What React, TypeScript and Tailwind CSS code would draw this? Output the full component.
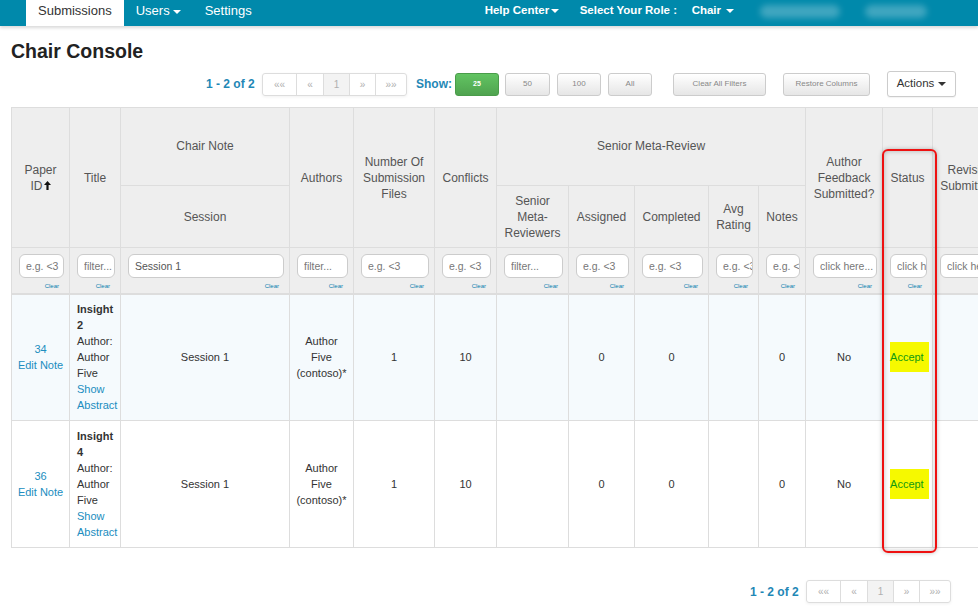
import React from 'react'

const th =
  'border border-[#dddddd] bg-[#eeeeee] px-[3px] text-center align-middle text-[12px] font-normal leading-[16px] text-[#555555]'
const td = 'border border-[#dddddd] text-center align-middle text-[11px] leading-[16px] text-[#333333]'
const link = 'text-[#208dc0]'

const Caret = ({ className = 'border-t-white' }: { className?: string }) => (
  <span className={`inline-block h-0 w-0 border-x-[4px] border-t-[4px] border-x-transparent align-middle ${className}`} />
)

function Pager() {
  const cells: [string, string][] = [
    ['««', 'w-[33px]'],
    ['«', 'w-[27px]'],
    ['1', 'w-[26px] bg-[#f3f3f3] text-[#999999]'],
    ['»', 'w-[26px]'],
    ['»»', 'w-[31px]'],
  ]
  return (
    <div className="flex items-center">
      <span className="mr-[8px] w-[48px] whitespace-nowrap text-[12px] font-bold text-[#1f88b6]">1 - 2 of 2</span>
      <div className="flex h-[23px] overflow-hidden rounded-[3px] border border-[#dddddd] shadow-[0_1px_3px_rgba(0,0,0,0.06)]">
        {cells.map(([label, cls], i) => (
          <div
            key={i}
            className={`flex items-center justify-center text-[10px] text-[#b0b0b0] ${i > 0 ? 'border-l border-[#dddddd]' : ''} ${cls}`}
          >
            {label}
          </div>
        ))}
      </div>
    </div>
  )
}

const grayBtn =
  'flex h-[23px] items-center justify-center rounded-[3px] border border-[#cccccc] bg-gradient-to-b from-white to-[#e6e6e6] text-[8px] text-[#888888]'

function Filter({ placeholder, value }: { placeholder?: string; value?: string }) {
  return (
    <td className="border border-b-2 border-[#dddddd] bg-[#eeeeee] pl-[7px] pr-[5px] pt-[6px] align-top">
      <input
        readOnly
        defaultValue={value}
        placeholder={placeholder}
        className="block h-[24px] w-full rounded-[6px] border border-[#cccccc] bg-white pl-[6px] text-[10.5px] text-[#555555] outline-none placeholder:text-[#777777]"
      />
      <div className="mt-[4px] pr-[5px] text-right text-[6px] leading-[8px] text-[#0a7fae]">Clear</div>
    </td>
  )
}

const Lines = ({ lines }: { lines: string[] }) => (
  <>
    {lines.map((l) => (
      <span key={l} className="block whitespace-nowrap">
        {l}
      </span>
    ))}
  </>
)

const rows = [
  { id: '34', title: ['Insight', '2'], bg: 'bg-[#f5fafd]' },
  { id: '36', title: ['Insight', '4'], bg: 'bg-white' },
]

export default function App() {
  return (
    <div className="relative h-[610px] w-full overflow-hidden bg-white font-['Liberation_Sans',Arial,sans-serif]">
      {/* Navbar */}
      <div className="relative z-10 flex h-[26px] items-stretch bg-[#0089ab] pl-[26px] text-white shadow-[0_2px_3px_rgba(0,0,0,0.15)]">
        <div className="flex items-center bg-white px-[12px] pb-[4px] text-[13px] text-[#333333]">Submissions</div>
        <div className="flex items-center px-[12px] pb-[4px] text-[13px]">
          Users <span className="ml-[3px]"><Caret /></span>
        </div>
        <div className="flex items-center px-[12px] pb-[4px] text-[13px]">Settings</div>
        <div className="ml-[221px] flex w-[95px] items-center pb-[4px] text-[11.5px] font-bold">
          Help Center<span className="ml-[2px]"><Caret /></span>
        </div>
        <div className="flex w-[112px] items-center whitespace-nowrap pb-[4px] text-[11.5px] font-bold">Select Your Role :</div>
        <div className="flex w-[68px] items-center pb-[4px] text-[11.5px] font-bold">
          Chair<span className="ml-[5px]"><Caret /></span>
        </div>
        <div className="flex items-center pb-[4px]">
          <div className="h-[13px] w-[80px] rounded-full bg-white/25 blur-[3px]" />
          <div className="ml-[25px] h-[13px] w-[62px] rounded-full bg-white/25 blur-[3px]" />
        </div>
      </div>

      <h1 className="ml-[11px] mt-[13px] text-[19.5px] font-bold leading-[24px] text-[#222222]">Chair Console</h1>

      {/* Controls */}
      <div className="mt-[8px] flex h-[26px] items-center pl-[206px]">
        <Pager />
        <span className="ml-[9px] w-[39px] text-[12px] font-bold text-[#1f88b6]">Show:</span>
        <div className="flex h-[23px] w-[44px] items-center justify-center rounded-[3px] border border-[#4a9c4a] bg-gradient-to-b from-[#62c462] to-[#4fa34f] text-[7px] font-bold text-white">
          25
        </div>
        <div className={`${grayBtn} ml-[6px] w-[45px]`}>50</div>
        <div className={`${grayBtn} ml-[7px] w-[44px]`}>100</div>
        <div className={`${grayBtn} ml-[7px] w-[44px]`}>All</div>
        <div className={`${grayBtn} ml-[21px] w-[93px]`}>Clear All Filters</div>
        <div className={`${grayBtn} ml-[17px] w-[87px]`}>Restore Columns</div>
        <div className="ml-[17px] flex h-[26px] w-[69px] items-center justify-center rounded-[3px] border border-[#cccccc] bg-white text-[11.5px] text-[#333333] shadow-[0_1px_1px_rgba(0,0,0,0.05)]">
          Actions<span className="ml-[4px]"><Caret className="border-t-[#333333]" /></span>
        </div>
      </div>

      {/* Table */}
      <div className="ml-[11px] mt-[10px] overflow-hidden">
        <table className="w-[1097px] table-fixed border-collapse">
          <colgroup>
            <col className="w-[58px]" />
            <col className="w-[51px]" />
            <col className="w-[169px]" />
            <col className="w-[64px]" />
            <col className="w-[81px]" />
            <col className="w-[62px]" />
            <col className="w-[72px]" />
            <col className="w-[66px]" />
            <col className="w-[74px]" />
            <col className="w-[50px]" />
            <col className="w-[47px]" />
            <col className="w-[77px]" />
            <col className="w-[50px]" />
            <col className="w-[76px]" />
            <col className="w-[100px]" />
          </colgroup>
          <thead>
            <tr className="h-[78px]">
              <th rowSpan={2} className={th}>
                <span className="block">Paper</span>
                <span className="flex items-center justify-center">
                  ID
                  <svg width="7" height="9" viewBox="0 0 7 9" className="ml-[1px]">
                    <path d="M3.5 0 L7 4 L4.6 4 L4.6 9 L2.4 9 L2.4 4 L0 4 Z" fill="#111111" />
                  </svg>
                </span>
              </th>
              <th rowSpan={2} className={th}>Title</th>
              <th className={`${th} pb-[2px]`}>Chair Note</th>
              <th rowSpan={2} className={th}>Authors</th>
              <th rowSpan={2} className={th}>
                <Lines lines={['Number Of', 'Submission', 'Files']} />
              </th>
              <th rowSpan={2} className={th}>Conflicts</th>
              <th colSpan={5} className={`${th} pb-[2px]`}>Senior Meta-Review</th>
              <th rowSpan={2} className={th}>
                <Lines lines={['Author', 'Feedback', 'Submitted?']} />
              </th>
              <th rowSpan={2} className={th}>Status</th>
              <th rowSpan={2} className={th}>
                <Lines lines={['Revision', 'Submitted?']} />
              </th>
              <th rowSpan={2} className={th}>Decision</th>
            </tr>
            <tr className="h-[62px]">
              <th className={th}>Session</th>
              <th className={th}>
                <Lines lines={['Senior', 'Meta-', 'Reviewers']} />
              </th>
              <th className={th}>Assigned</th>
              <th className={th}>Completed</th>
              <th className={th}>
                <Lines lines={['Avg', 'Rating']} />
              </th>
              <th className={th}>Notes</th>
            </tr>
            <tr className="h-[46px]">
              <Filter placeholder="e.g. <3" />
              <Filter placeholder="filter..." />
              <Filter value="Session 1" />
              <Filter placeholder="filter..." />
              <Filter placeholder="e.g. <3" />
              <Filter placeholder="e.g. <3" />
              <Filter placeholder="filter..." />
              <Filter placeholder="e.g. <3" />
              <Filter placeholder="e.g. <3" />
              <Filter placeholder="e.g. <3" />
              <Filter placeholder="e.g. <3" />
              <Filter placeholder="click here..." />
              <Filter placeholder="click here..." />
              <Filter placeholder="click here..." />
              <Filter placeholder="click here..." />
            </tr>
          </thead>
          <tbody>
            {rows.map((r) => (
              <tr key={r.id} className={`h-[127px] ${r.bg}`}>
                <td className={td}>
                  <span className={`block ${link}`}>{r.id}</span>
                  <span className={`block whitespace-nowrap ${link}`}>Edit Note</span>
                </td>
                <td className={`${td} pl-[7px] text-left`}>
                  {r.title.map((t) => (
                    <span key={t} className="block font-bold">
                      {t}
                    </span>
                  ))}
                  <Lines lines={['Author:', 'Author', 'Five']} />
                  <span className={`block ${link}`}>Show</span>
                  <span className={`block ${link}`}>Abstract</span>
                </td>
                <td className={td}>Session 1</td>
                <td className={td}>
                  <Lines lines={['Author', 'Five', '(contoso)*']} />
                </td>
                <td className={`${td} ${link}`}>1</td>
                <td className={`${td} ${link}`}>10</td>
                <td className={td} />
                <td className={td}>0</td>
                <td className={td}>0</td>
                <td className={td} />
                <td className={`${td} ${link}`}>0</td>
                <td className={td}>No</td>
                <td className={`${td} pl-[7px] text-left`}>
                  <span className="inline-block w-[39px] bg-[#f6f900] py-[7px] text-[11px] leading-[16px] text-[#119a11]">
                    Accept
                  </span>
                </td>
                <td className={td} />
                <td className={td} />
              </tr>
            ))}
          </tbody>
        </table>
      </div>

      {/* Bottom pager */}
      <div className="mt-[32px] flex pl-[750px]">
        <Pager />
      </div>

      {/* Red highlight annotation */}
      <div className="pointer-events-none absolute left-[882px] top-[149px] h-[404px] w-[55px] rounded-[6px] border-2 border-[#ee1111] shadow-[inset_0_0_5px_rgba(0,0,0,0.25),0_0_4px_rgba(0,0,0,0.25)]" />
    </div>
  )
}
